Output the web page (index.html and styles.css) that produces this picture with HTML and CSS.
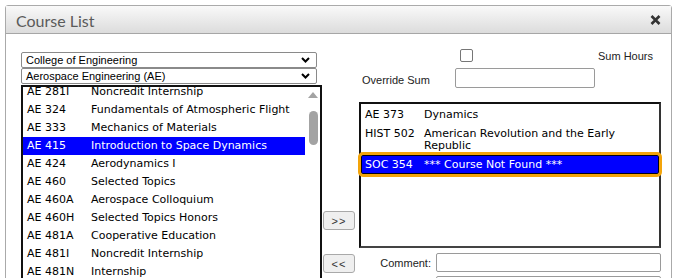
FILE: index.html
```html
<!DOCTYPE html>
<html lang="en">
<head>
  <meta charset="UTF-8" />
  <title>Course List</title>
  <link rel="stylesheet" href="styles.css">
</head>
<body>

  <!-- DIALOG -->
  <div class="dialog">
    <div class="titlebar">
      <span class="title">Course List</span>
      <span class="close">
        <svg width="11" height="10" viewBox="0 0 11 10">
          <path d="M1.5 1 L9.5 9 M9.5 1 L1.5 9" stroke="#333" stroke-width="2.6" fill="none" />
        </svg>
      </span>
    </div>

    <div class="dialog-body">

      <!-- LEFT: filters + available courses -->
      <div class="col-left">
        <div class="dropdown">
          <span>College of Engineering</span>
          <svg class="chev" width="9" height="6" viewBox="0 0 9 6"><path d="M1 1 L4.5 4.5 L8 1" stroke="#000" stroke-width="2" fill="none" /></svg>
        </div>
        <div class="dropdown">
          <span>Aerospace Engineering (AE)</span>
          <svg class="chev" width="9" height="6" viewBox="0 0 9 6"><path d="M1 1 L4.5 4.5 L8 1" stroke="#000" stroke-width="2" fill="none" /></svg>
        </div>

        <div class="listbox course-list">
          <div class="list-rows scrolled">
            <div class="row"><span class="code">AE 281I</span><span class="name">Noncredit Internship</span></div>
            <div class="row"><span class="code">AE 324</span><span class="name">Fundamentals of Atmospheric Flight</span></div>
            <div class="row"><span class="code">AE 333</span><span class="name">Mechanics of Materials</span></div>
            <div class="row selected"><span class="code">AE 415</span><span class="name">Introduction to Space Dynamics</span></div>
            <div class="row"><span class="code">AE 424</span><span class="name">Aerodynamics I</span></div>
            <div class="row"><span class="code">AE 460</span><span class="name">Selected Topics</span></div>
            <div class="row"><span class="code">AE 460A</span><span class="name">Aerospace Colloquium</span></div>
            <div class="row"><span class="code">AE 460H</span><span class="name">Selected Topics Honors</span></div>
            <div class="row"><span class="code">AE 481A</span><span class="name">Cooperative Education</span></div>
            <div class="row"><span class="code">AE 481I</span><span class="name">Noncredit Internship</span></div>
            <div class="row"><span class="code">AE 481N</span><span class="name">Internship</span></div>
          </div>
          <div class="scrollbar">
            <svg class="arrow-up" width="10" height="6" viewBox="0 0 10 6"><path d="M0 6 L5 0 L10 6 Z" fill="#a3a3a3" /></svg>
            <div class="thumb"></div>
          </div>
        </div>
      </div>

      <!-- MIDDLE: move buttons -->
      <div class="col-mid">
        <button class="move-btn add">&gt;&gt;</button>
        <button class="move-btn remove">&lt;&lt;</button>
      </div>

      <!-- RIGHT: selected courses -->
      <div class="col-right">
        <div class="sum-row">
          <span class="checkbox"></span>
          <span class="label">Sum Hours</span>
        </div>
        <div class="override-row">
          <span class="label">Override Sum</span>
          <span class="text-input override"></span>
        </div>

        <div class="listbox chosen-list">
          <div class="list-rows">
            <div class="row"><span class="code">AE 373</span><span class="name">Dynamics</span></div>
            <div class="row"><span class="code">HIST 502</span><span class="name">American Revolution and the Early Republic</span></div>
            <div class="row selected focused"><span class="code">SOC 354</span><span class="name">*** Course Not Found ***</span></div>
          </div>
        </div>

        <div class="comment-row">
          <span class="label">Comment:</span>
          <span class="text-input comment"></span>
        </div>
        <div class="comment-row">
          <span class="label"></span>
          <span class="text-input comment"></span>
        </div>
      </div>

    </div>
  </div>

</body>
</html>
```

FILE: styles.css
```css
* {
  margin: 0;
  padding: 0;
  box-sizing: border-box;
}

html, body {
  height: 100%;
  overflow: hidden;
  background: #fff;
  font-family: "Liberation Sans", Arial, sans-serif;
  font-size: 11px;
  color: #222;
}

/* Dialog frame */
.dialog {
  margin: 5px 0 0 5px;
  width: 667px;
  height: 400px;
  border: 1px solid #aaa;
  border-radius: 3px 3px 0 0;
  background: #fff;
}

.titlebar {
  height: 28px;
  display: flex;
  align-items: center;
  justify-content: space-between;
  padding: 0 10px 0 10px;
  background: linear-gradient(#f9f9f9, #dcdcdc);
  border-bottom: 1px solid #a6a6a6;
}

.title {
  font-family: Lato, "Liberation Sans", sans-serif;
  font-size: 16px;
  color: #5a5a5a;
  margin-top: 1px;
}

.close {
  display: flex;
  margin-top: 1px;
}

.dialog-body {
  display: flex;
  padding: 18px 9px 0 15px;
}

/* Left column */
.col-left {
  width: 301px;
  display: flex;
  flex-direction: column;
}

.dropdown {
  width: 296px;
  height: 16px;
  display: flex;
  align-items: center;
  justify-content: space-between;
  padding: 0 5px 0 4px;
  border: 1px solid #8a8a8a;
  border-radius: 2px;
  font-size: 11px;
  color: #000;
}

.chev {
  margin-right: 1px;
}

.listbox {
  border: 2px solid #111;
  background: #fff;
  font-family: "DejaVu Sans", Verdana, sans-serif;
  font-size: 11px;
  color: #000;
  overflow: hidden;
}

.course-list {
  margin-top: 1px;
  height: 240px;
  display: flex;
}

.course-list .list-rows {
  width: 282px;
}

.scrolled {
  margin-top: -4px;
}

.row {
  display: flex;
  padding: 3px 0 3px 4px;
  line-height: 12px;
}

.course-list .code {
  width: 64px;
  flex-shrink: 0;
}

.row.selected {
  background: #0000ff;
  color: #fff;
}

.scrollbar {
  width: 15px;
  display: flex;
  flex-direction: column;
  align-items: center;
  padding-top: 5px;
}

.arrow-up {
  margin-left: 1px;
}

.thumb {
  width: 9px;
  height: 34px;
  margin-top: 13px;
  margin-left: 1px;
  border-radius: 5px;
  background: #a3a3a3;
}

/* Middle column */
.col-mid {
  width: 37px;
  display: flex;
  flex-direction: column;
  align-items: flex-start;
}

.move-btn {
  width: 32px;
  height: 19px;
  margin-left: 1px;
  background: #efefef;
  border: 1px solid #a9a9a9;
  border-radius: 3px;
  font-family: "Liberation Sans", Arial, sans-serif;
  font-size: 11px;
  color: #333;
  letter-spacing: 1px;
}

.move-btn.add {
  margin-top: 159px;
}

.move-btn.remove {
  margin-top: 24px;
}

/* Right column */
.col-right {
  width: 302px;
  margin-top: -4px;
  display: flex;
  flex-direction: column;
}

.sum-row {
  height: 14px;
  display: flex;
  align-items: center;
  justify-content: space-between;
  padding: 0 8px 0 101px;
}

.checkbox {
  width: 13px;
  height: 13px;
  margin-top: 1px;
  border: 1px solid #767676;
  border-radius: 2px;
}

.sum-row .label {
  margin-top: 2px;
}

.override-row {
  display: flex;
  align-items: center;
  margin-top: 6px;
  padding-left: 3px;
}

.override-row .label {
  width: 93px;
  margin-top: 3px;
}

.text-input {
  display: block;
  border: 1px solid #9a9a9a;
  border-radius: 2px;
  background: #fff;
}

.text-input.override {
  width: 140px;
  height: 20px;
}

.chosen-list {
  margin-top: 14px;
  height: 146px;
  padding-top: 1px;
  border-color: #111 #333 #444 #111;
  overflow: visible;
}

.chosen-list .row {
  padding-top: 4px;
}

.chosen-list .code {
  width: 59px;
  flex-shrink: 0;
}

.chosen-list .name {
  padding-right: 6px;
}

.row.focused {
  outline: 3px solid #f3a40a;
  border-radius: 2px;
  box-shadow: inset 0 0 0 1px #001;
}

.comment-row {
  display: flex;
  align-items: center;
  margin-top: 5px;
}

.comment-row + .comment-row {
  margin-top: 4px;
}

.comment-row .label {
  width: 73px;
  text-align: right;
  padding-right: 1px;
}

.text-input.comment {
  margin-left: 4px;
  width: 225px;
  height: 19px;
}
```
